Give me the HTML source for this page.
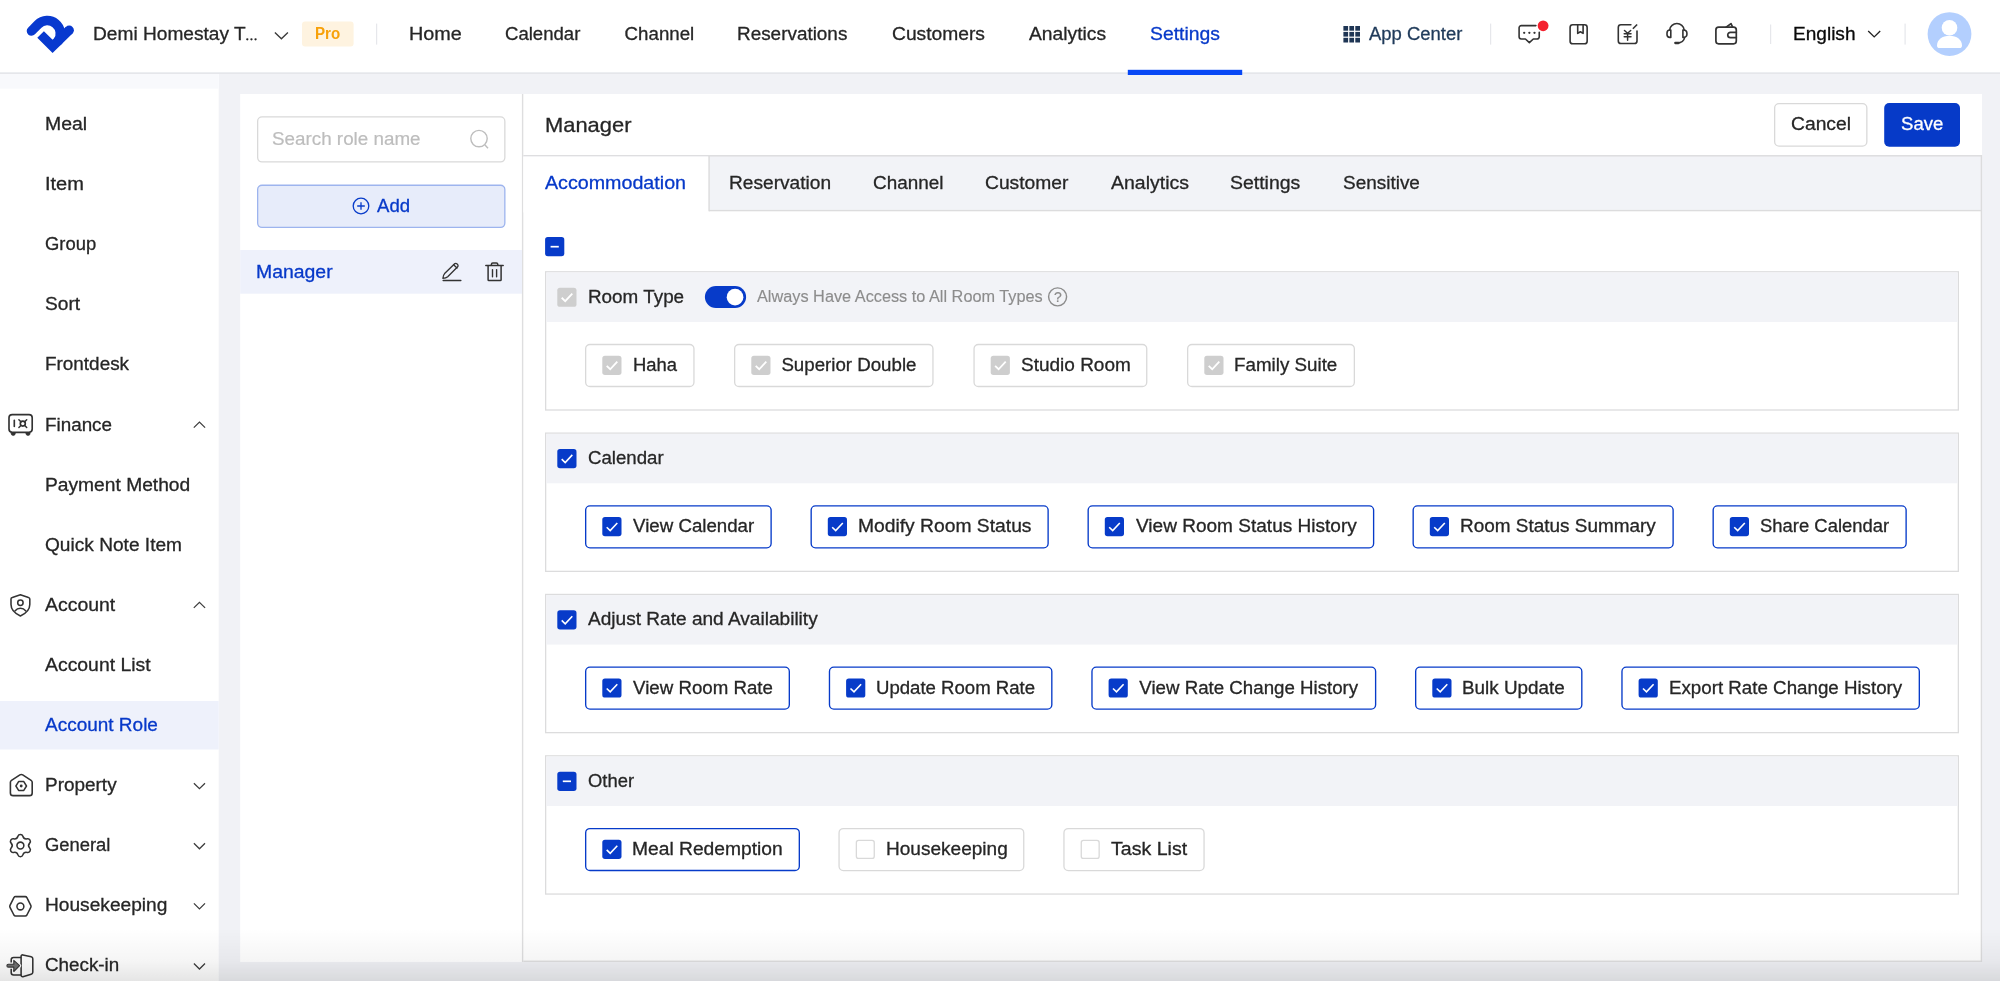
<!DOCTYPE html>
<html lang="en"><head><meta charset="utf-8"><title>Account Role</title>
<style>
html,body{margin:0;padding:0}
body{width:2000px;height:981px;overflow:hidden;position:relative;background:#f1f2f6;font-family:"Liberation Sans", sans-serif;}
#w{position:absolute;left:0;top:0;width:2000px;height:981px;will-change:transform}
#g{position:absolute;left:0;top:0}
.t{position:absolute;white-space:nowrap;line-height:30px;transform-origin:0 50%;font-family:"Liberation Sans", sans-serif;-webkit-text-stroke:0.3px currentColor}
.a{position:absolute}
</style></head><body><div id="w">
<svg id="g" width="2000" height="981" viewBox="0 0 2000 981">
<rect x="0" y="72" width="218.7" height="909" fill="#ffffff"/>
<rect x="0" y="72" width="218.7" height="16.7" fill="#f8f9fc"/>
<rect x="240.2" y="94" width="1741.8" height="867.9" fill="#ffffff"/>
<rect x="523.3" y="960.6" width="1458.7" height="1.3" fill="#dcdcdd"/>
<rect x="521.9" y="94" width="1.4" height="868" fill="#dededf"/>
<rect x="0" y="0" width="2000" height="72" fill="#ffffff"/>
<rect x="0" y="72" width="2000" height="1" fill="#eceef1"/>
<rect x="0" y="73" width="2000" height="1" fill="#e5e6ea"/>
<path d="M31.5 31 L38.05 24.33 A13.1 13.1 0 0 1 58.1 41" fill="none" stroke="#0839cf" stroke-width="9.6" stroke-linecap="round"/>
<path d="M40.6 34.5 L52.6 46.4 L69.2 30.2" fill="none" stroke="#0839cf" stroke-width="9.4" stroke-linejoin="miter"/>
<circle cx="69.2" cy="30.2" r="4.7" fill="#0839cf"/>
<g fill="#262626"><circle cx="247.3" cy="39.3" r="1.15"/><circle cx="251.45" cy="39.3" r="1.15"/><circle cx="255.55" cy="39.3" r="1.15"/></g>
<path d="M274.9 32.5 L281.4 38.8 L287.9 32.5" fill="none" stroke="#3a3a3a" stroke-width="1.35"/>
<rect x="302" y="21.6" width="51.6" height="25" fill="#fef3e0" rx="3"/>
<rect x="376" y="23.6" width="1.2" height="21" fill="#e6e7eb"/>
<rect x="1127.8" y="69.8" width="114.4" height="5.2" fill="#0848f5"/>
<g fill="#1e3554"><rect x="1343.40" y="26.00" width="4.7" height="4.7"/><rect x="1343.40" y="31.90" width="4.7" height="4.7"/><rect x="1343.40" y="37.80" width="4.7" height="4.7"/><rect x="1349.35" y="26.00" width="4.7" height="4.7"/><rect x="1349.35" y="31.90" width="4.7" height="4.7"/><rect x="1349.35" y="37.80" width="4.7" height="4.7"/><rect x="1355.30" y="26.00" width="4.7" height="4.7"/><rect x="1355.30" y="31.90" width="4.7" height="4.7"/><rect x="1355.30" y="37.80" width="4.7" height="4.7"/></g>
<rect x="1490" y="23.6" width="1.2" height="21" fill="#e6e7eb"/>
<rect x="1770" y="24.5" width="1.2" height="19.5" fill="#e6e7eb"/>
<rect x="1904.5" y="23.6" width="1.2" height="21" fill="#e6e7eb"/>
<path d="M1868.2 31 L1874.2 36.9 L1880.2 31" fill="none" stroke="#222" stroke-width="1.35"/>
<g transform="translate(1927.6 12.2)" ><circle cx="21.9" cy="21.9" r="21.9" fill="#b3cffe"/>
<circle cx="21.9" cy="15.6" r="7.8" fill="#fff"/>
<path d="M9.4 33.5 C9.4 27.5 14.5 23.6 21.9 23.6 C29.3 23.6 34.4 27.5 34.4 33.5 C34.4 35 33.4 35.8 32 35.8 L11.8 35.8 C10.4 35.8 9.4 35 9.4 33.5 Z" fill="#fff"/></g>
<rect x="0" y="701" width="218.7" height="48.5" fill="#eef1fb"/>
<path d="M193.8 427.6 L199.45 422.1 L205.1 427.6" fill="none" stroke="#3c3c3c" stroke-width="1.25"/>
<path d="M193.8 607.9 L199.45 602.4 L205.1 607.9" fill="none" stroke="#3c3c3c" stroke-width="1.25"/>
<path d="M193.9 783.2 L199.45 788.7 L205 783.2" fill="none" stroke="#3c3c3c" stroke-width="1.25"/>
<path d="M193.9 843.3 L199.45 848.8 L205 843.3" fill="none" stroke="#3c3c3c" stroke-width="1.25"/>
<path d="M193.9 903.4 L199.45 908.9 L205 903.4" fill="none" stroke="#3c3c3c" stroke-width="1.25"/>
<path d="M193.9 963.5 L199.45 969.0 L205 963.5" fill="none" stroke="#3c3c3c" stroke-width="1.25"/>
<rect x="257.65" y="116.85" width="247.20" height="45.10" rx="4.35" fill="#fff" stroke="#d9d9d9" stroke-width="1.3"/>
<g transform="translate(469 128)" ><circle cx="10" cy="10.6" r="8.2" fill="none" stroke="#bdbdbd" stroke-width="1.4"/><path d="M16 17 L19 20.2" stroke="#bdbdbd" stroke-width="1.4"/></g>
<rect x="257.65" y="185.25" width="247.20" height="42.20" rx="4.35" fill="#e7ecfa" stroke="#9db4ee" stroke-width="1.3"/>
<g transform="translate(352 197)" ><circle cx="9" cy="9" r="7.8" fill="none" stroke="#073bc9" stroke-width="1.3"/><path d="M9 5.2 V12.8 M5.2 9 H12.8" stroke="#073bc9" stroke-width="1.3"/></g>
<rect x="240.2" y="250" width="281.8" height="43.7" fill="#eef1fb"/>
<rect x="1774.65" y="103.65" width="92.20" height="42.50" rx="4.35" fill="#fff" stroke="#d9d9d9" stroke-width="1.3"/>
<rect x="1884.2" y="103" width="75.8" height="43.8" fill="#063ac8" rx="5"/>
<rect x="523.3" y="155" width="1458.7" height="56" fill="#f2f3f7"/>
<rect x="523.3" y="155.1" width="1458.7" height="1.4" fill="#dcdcdd"/>
<rect x="709" y="209.9" width="1273" height="1.4" fill="#dcdcdd"/>
<rect x="523.3" y="156.5" width="185.2" height="56" fill="#fff"/>
<rect x="708.4" y="156" width="1.4" height="55.3" fill="#dcdcdd"/>
<rect x="1980.7" y="155.1" width="1.4" height="806.8" fill="#dcdcdd"/>
<g transform="translate(545.1 237.1)" ><rect width="19.2" height="19.2" rx="2.7" fill="#073bc9"/><path d="M5.5 9.6 H13.7" stroke="#fff" stroke-width="1.7"/></g>
<rect x="545.65" y="271.80" width="1412.70" height="138.20" rx="0.00" fill="#fff" stroke="#dcdcdd" stroke-width="1.3"/>
<rect x="546.3" y="272.45" width="1411.4" height="49.5" fill="#f2f3f7"/>
<g transform="translate(557.3 287.65)" ><rect width="19.2" height="19.2" rx="2.7" fill="#cecece"/><path d="M4.4 10.1 L7.9 13.5 L15 5.9" fill="none" stroke="#fff" stroke-width="1.8"/></g>
<rect x="585.65" y="344.50" width="108.30" height="42.00" rx="4.35" fill="#fff" stroke="#d9d9d9" stroke-width="1.3"/>
<g transform="translate(602.3 355.75)" ><rect width="19.2" height="19.2" rx="2.7" fill="#cecece"/><path d="M4.4 10.1 L7.9 13.5 L15 5.9" fill="none" stroke="#fff" stroke-width="1.8"/></g>
<rect x="734.65" y="344.50" width="198.30" height="42.00" rx="4.35" fill="#fff" stroke="#d9d9d9" stroke-width="1.3"/>
<g transform="translate(751.3 355.75)" ><rect width="19.2" height="19.2" rx="2.7" fill="#cecece"/><path d="M4.4 10.1 L7.9 13.5 L15 5.9" fill="none" stroke="#fff" stroke-width="1.8"/></g>
<rect x="974.05" y="344.50" width="172.70" height="42.00" rx="4.35" fill="#fff" stroke="#d9d9d9" stroke-width="1.3"/>
<g transform="translate(990.6999999999999 355.75)" ><rect width="19.2" height="19.2" rx="2.7" fill="#cecece"/><path d="M4.4 10.1 L7.9 13.5 L15 5.9" fill="none" stroke="#fff" stroke-width="1.8"/></g>
<rect x="1187.65" y="344.50" width="166.70" height="42.00" rx="4.35" fill="#fff" stroke="#d9d9d9" stroke-width="1.3"/>
<g transform="translate(1204.3 355.75)" ><rect width="19.2" height="19.2" rx="2.7" fill="#cecece"/><path d="M4.4 10.1 L7.9 13.5 L15 5.9" fill="none" stroke="#fff" stroke-width="1.8"/></g>
<g transform="translate(704.9 286)" ><rect width="41.2" height="22.05" rx="11" fill="#073bc9"/><circle cx="30.15" cy="11.2" r="8.35" fill="#fff"/></g>
<circle cx="1057.6" cy="296.85" r="9" fill="none" stroke="#8c8c8c" stroke-width="1.45"/>
<rect x="545.65" y="433.15" width="1412.70" height="138.20" rx="0.00" fill="#fff" stroke="#dcdcdd" stroke-width="1.3"/>
<rect x="546.3" y="433.8" width="1411.4" height="49.5" fill="#f2f3f7"/>
<g transform="translate(557.3 449.0)" ><rect width="19.2" height="19.2" rx="2.7" fill="#073bc9"/><path d="M4.4 10.1 L7.9 13.5 L15 5.9" fill="none" stroke="#fff" stroke-width="1.6"/></g>
<rect x="585.67" y="505.88" width="185.45" height="41.95" rx="4.33" fill="#fff" stroke="#073bc9" stroke-width="1.35"/>
<g transform="translate(602.3 517.1)" ><rect width="19.2" height="19.2" rx="2.7" fill="#073bc9"/><path d="M4.4 10.1 L7.9 13.5 L15 5.9" fill="none" stroke="#fff" stroke-width="1.6"/></g>
<rect x="811.17" y="505.88" width="236.95" height="41.95" rx="4.33" fill="#fff" stroke="#073bc9" stroke-width="1.35"/>
<g transform="translate(827.8 517.1)" ><rect width="19.2" height="19.2" rx="2.7" fill="#073bc9"/><path d="M4.4 10.1 L7.9 13.5 L15 5.9" fill="none" stroke="#fff" stroke-width="1.6"/></g>
<rect x="1088.17" y="505.88" width="285.45" height="41.95" rx="4.33" fill="#fff" stroke="#073bc9" stroke-width="1.35"/>
<g transform="translate(1104.8 517.1)" ><rect width="19.2" height="19.2" rx="2.7" fill="#073bc9"/><path d="M4.4 10.1 L7.9 13.5 L15 5.9" fill="none" stroke="#fff" stroke-width="1.6"/></g>
<rect x="1413.17" y="505.88" width="259.95" height="41.95" rx="4.33" fill="#fff" stroke="#073bc9" stroke-width="1.35"/>
<g transform="translate(1429.8 517.1)" ><rect width="19.2" height="19.2" rx="2.7" fill="#073bc9"/><path d="M4.4 10.1 L7.9 13.5 L15 5.9" fill="none" stroke="#fff" stroke-width="1.6"/></g>
<rect x="1713.17" y="505.88" width="192.95" height="41.95" rx="4.33" fill="#fff" stroke="#073bc9" stroke-width="1.35"/>
<g transform="translate(1729.8 517.1)" ><rect width="19.2" height="19.2" rx="2.7" fill="#073bc9"/><path d="M4.4 10.1 L7.9 13.5 L15 5.9" fill="none" stroke="#fff" stroke-width="1.6"/></g>
<rect x="545.65" y="594.45" width="1412.70" height="138.20" rx="0.00" fill="#fff" stroke="#dcdcdd" stroke-width="1.3"/>
<rect x="546.3" y="595.0999999999999" width="1411.4" height="49.5" fill="#f2f3f7"/>
<g transform="translate(557.3 610.3)" ><rect width="19.2" height="19.2" rx="2.7" fill="#073bc9"/><path d="M4.4 10.1 L7.9 13.5 L15 5.9" fill="none" stroke="#fff" stroke-width="1.6"/></g>
<rect x="585.67" y="667.17" width="203.65" height="41.95" rx="4.33" fill="#fff" stroke="#073bc9" stroke-width="1.35"/>
<g transform="translate(602.3 678.4)" ><rect width="19.2" height="19.2" rx="2.7" fill="#073bc9"/><path d="M4.4 10.1 L7.9 13.5 L15 5.9" fill="none" stroke="#fff" stroke-width="1.6"/></g>
<rect x="829.47" y="667.17" width="222.35" height="41.95" rx="4.33" fill="#fff" stroke="#073bc9" stroke-width="1.35"/>
<g transform="translate(846.0999999999999 678.4)" ><rect width="19.2" height="19.2" rx="2.7" fill="#073bc9"/><path d="M4.4 10.1 L7.9 13.5 L15 5.9" fill="none" stroke="#fff" stroke-width="1.6"/></g>
<rect x="1091.97" y="667.17" width="283.65" height="41.95" rx="4.33" fill="#fff" stroke="#073bc9" stroke-width="1.35"/>
<g transform="translate(1108.6 678.4)" ><rect width="19.2" height="19.2" rx="2.7" fill="#073bc9"/><path d="M4.4 10.1 L7.9 13.5 L15 5.9" fill="none" stroke="#fff" stroke-width="1.6"/></g>
<rect x="1415.67" y="667.17" width="166.15" height="41.95" rx="4.33" fill="#fff" stroke="#073bc9" stroke-width="1.35"/>
<g transform="translate(1432.3 678.4)" ><rect width="19.2" height="19.2" rx="2.7" fill="#073bc9"/><path d="M4.4 10.1 L7.9 13.5 L15 5.9" fill="none" stroke="#fff" stroke-width="1.6"/></g>
<rect x="1621.97" y="667.17" width="297.35" height="41.95" rx="4.33" fill="#fff" stroke="#073bc9" stroke-width="1.35"/>
<g transform="translate(1638.6 678.4)" ><rect width="19.2" height="19.2" rx="2.7" fill="#073bc9"/><path d="M4.4 10.1 L7.9 13.5 L15 5.9" fill="none" stroke="#fff" stroke-width="1.6"/></g>
<rect x="545.65" y="755.85" width="1412.70" height="138.20" rx="0.00" fill="#fff" stroke="#dcdcdd" stroke-width="1.3"/>
<rect x="546.3" y="756.5" width="1411.4" height="49.5" fill="#f2f3f7"/>
<g transform="translate(557.3 771.7)" ><rect width="19.2" height="19.2" rx="2.7" fill="#073bc9"/><path d="M5.5 9.6 H13.7" stroke="#fff" stroke-width="1.7"/></g>
<rect x="585.67" y="828.58" width="213.65" height="41.95" rx="4.33" fill="#fff" stroke="#073bc9" stroke-width="1.35"/>
<g transform="translate(602.3 839.8000000000001)" ><rect width="19.2" height="19.2" rx="2.7" fill="#073bc9"/><path d="M4.4 10.1 L7.9 13.5 L15 5.9" fill="none" stroke="#fff" stroke-width="1.6"/></g>
<rect x="839.05" y="828.55" width="184.70" height="42.00" rx="4.35" fill="#fff" stroke="#d9d9d9" stroke-width="1.3"/>
<g transform="translate(855.6999999999999 839.8000000000001)" ><rect x="0.65" y="0.65" width="17.9" height="17.9" rx="2.2" fill="#fff" stroke="#d9d9d9" stroke-width="1.3"/></g>
<rect x="1063.95" y="828.55" width="140.10" height="42.00" rx="4.35" fill="#fff" stroke="#d9d9d9" stroke-width="1.3"/>
<g transform="translate(1080.6 839.8000000000001)" ><rect x="0.65" y="0.65" width="17.9" height="17.9" rx="2.2" fill="#fff" stroke="#d9d9d9" stroke-width="1.3"/></g>
<g fill="none" stroke="#333333" stroke-width="1.6" stroke-linecap="round" stroke-linejoin="round">
<path d="M1535.9 25.6 H1521.3 A2.2 2.2 0 0 0 1519.1 27.8 V36.8 A2.2 2.2 0 0 0 1521.3 39 H1525.4 L1529.35 42.7 L1533.3 39 H1537 A2.2 2.2 0 0 0 1539.25 36.8 V32.2"/>
<g fill="#333" stroke="none"><circle cx="1524.2" cy="32.8" r="1.15"/><circle cx="1529.35" cy="32.8" r="1.15"/><circle cx="1534.5" cy="32.8" r="1.15"/></g>
<circle cx="1543.1" cy="25.8" r="5.4" fill="#f4212e" stroke="none"/></g>
<g fill="none" stroke="#333333" stroke-width="1.6" stroke-linecap="round" stroke-linejoin="round">
<rect x="1570.1" y="24.8" width="17.05" height="19" rx="2.6"/>
<path d="M1577.7 25 V33.4 L1580.4 31.7 L1583.1 33.4 V25"/></g>
<g fill="none" stroke="#333333" stroke-width="1.6" stroke-linecap="round" stroke-linejoin="round">
<path d="M1630.9 24.8 H1620.9 A2.6 2.6 0 0 0 1618.3 27.4 V40.9 A2.6 2.6 0 0 0 1620.9 43.5 H1634.4 A2.6 2.6 0 0 0 1637 40.9 V31"/>
<path d="M1637.1 24.5 L1632.9 28.7" stroke-linecap="butt"/>
<path d="M1624.5 30.5 L1627.6 33.3 L1630.7 30.5 M1627.6 33.3 V40.2 M1624.2 33.7 H1631 M1624.2 36.8 H1631" stroke-width="1.5"/></g>
<g fill="none" stroke="#333333" stroke-width="1.6" stroke-linecap="round" stroke-linejoin="round">
<path d="M1669.6 30 A7.35 7.35 0 0 1 1684.2 30"/>
<path d="M1670.8 30 V37.4 H1669.9 A3 3 0 0 1 1667 34.4 V33 A3 3 0 0 1 1669.9 30 Z"/>
<path d="M1682.9 30 V37.4 H1683.9 A3 3 0 0 0 1686.9 34.4 V33 A3 3 0 0 0 1683.9 30 Z"/>
<path d="M1684.6 37.6 C1684 40.6 1681 42.8 1677.5 43"/>
<path d="M1675.3 43 H1678.6" stroke-width="2.3"/></g>
<g fill="none" stroke="#333333" stroke-width="1.7" stroke-linecap="round" stroke-linejoin="round">
<rect x="1715.9" y="27.2" width="20.4" height="16.6" rx="2.7"/>
<path d="M1726.1 27.2 L1731 23.6 L1732.6 27.2"/>
<path d="M1736.3 32.3 H1730.4 A2.65 2.65 0 0 0 1730.4 37.6 H1736.3"/></g>
<g fill="none" stroke="#333333" stroke-width="1.65" stroke-linecap="round" stroke-linejoin="round">
<rect x="9" y="414.6" width="23.2" height="17.7" rx="3.2"/>
<path d="M14.3 420.4 V426.5"/>
<circle cx="22.8" cy="423.6" r="2.5"/>
<path d="M20.9 421.7 L18.9 419.7 M24.7 421.7 L26.7 419.7 M20.9 425.5 L18.9 427.5 M24.7 425.5 L26.7 427.5" stroke-width="1.5"/>
<path d="M11 433 H15.4 A2.2 2.6 0 0 1 11 433 Z M25.8 433 H30.2 A2.2 2.6 0 0 1 25.8 433 Z" fill="#333" stroke-width="0.6"/></g>
<g fill="none" stroke="#333333" stroke-width="1.55" stroke-linecap="round" stroke-linejoin="round">
<path d="M20.4 594.8 L12.3 597.4 A1.8 1.8 0 0 0 11 599.1 V604.6 C11 609.6 14.6 613.4 20.4 616 C26.2 613.4 29.8 609.6 29.8 604.6 V599.1 A1.8 1.8 0 0 0 28.5 597.4 Z"/>
<circle cx="20.4" cy="602.75" r="2.7"/>
<path d="M14.9 610.9 C16.4 609.2 18.3 608.3 20.4 608.3 C22.5 608.3 24.4 609.2 25.9 610.9"/></g>
<g fill="none" stroke="#333333" stroke-width="1.6" stroke-linecap="round" stroke-linejoin="round">
<path d="M19.9 774.9 L11.5 780.3 A2.4 2.4 0 0 0 10.4 782.3 V792.9 A2.7 2.7 0 0 0 13.1 795.6 H29.5 A2.7 2.7 0 0 0 32.2 792.9 V782.3 A2.4 2.4 0 0 0 31.1 780.3 L22.7 774.9 A2.6 2.6 0 0 0 19.9 774.9 Z"/>
<path d="M18.6 781.6 H23.8 L26.5 786 L23.8 790.4 H18.6 L15.9 786 Z" stroke-width="1.5"/>
<circle cx="21.2" cy="786" r="1.45" fill="#333" stroke="none"/></g>
<g fill="none" stroke="#333333" stroke-width="1.55" stroke-linecap="round" stroke-linejoin="round"><path d="M17.92 836.33 A2.6 2.6 0 0 1 22.88 836.33 A3.67 3.67 0 0 0 27.19 838.81 A2.6 2.6 0 0 1 29.67 843.11 A3.67 3.67 0 0 0 29.67 848.09 A2.6 2.6 0 0 1 27.19 852.39 A3.67 3.67 0 0 0 22.88 854.87 A2.6 2.6 0 0 1 17.92 854.87 A3.67 3.67 0 0 0 13.61 852.39 A2.6 2.6 0 0 1 11.13 848.09 A3.67 3.67 0 0 0 11.13 843.11 A2.6 2.6 0 0 1 13.61 838.81 A3.67 3.67 0 0 0 17.92 836.33 Z"/><circle cx="20.4" cy="845.6" r="3.45"/></g>
<g fill="none" stroke="#333333" stroke-width="1.55" stroke-linecap="round" stroke-linejoin="round">
<path d="M15.6 896.6 H25.2 A2 2 0 0 1 26.9 897.6 L30.8 905.4 A2.2 2.2 0 0 1 30.8 907.4 L26.9 915 A2 2 0 0 1 25.2 916 H15.6 A2 2 0 0 1 13.9 915 L10 907.4 A2.2 2.2 0 0 1 10 905.4 L13.9 897.6 A2 2 0 0 1 15.6 896.6 Z"/>
<circle cx="20.4" cy="906.4" r="3.45"/></g>
<g fill="none" stroke="#333333" stroke-width="1.55" stroke-linecap="round" stroke-linejoin="round">
<rect x="11.2" y="957.5" width="12" height="17.4" rx="2.4"/>
<path d="M22.9 954.9 L31.2 956.7 A2 2 0 0 1 32.8 958.7 V972.3 A2 2 0 0 1 31.2 974.2 L22.9 976.7 A1.5 1.5 0 0 1 21.1 975.3 V956.3 A1.5 1.5 0 0 1 22.9 954.9 Z" fill="#fff"/>
<path d="M8.3 964.3 H13.8 V960.4 L19.6 965.7 L13.8 971.5 V967.1 H8.3 A1.4 1.4 0 0 1 8.3 964.3 Z" stroke="#fff" stroke-width="3.4" fill="#fff"/>
<path d="M8.3 964.3 H13.8 V960.4 L19.6 965.7 L13.8 971.5 V967.1 H8.3 A1.4 1.4 0 0 1 8.3 964.3 Z" stroke="#383838" stroke-width="1.1" fill="#727272"/></g>
<g fill="none" stroke="#333333" stroke-width="1.5" stroke-linecap="round" stroke-linejoin="round">
<path d="M443.2 280.6 H460.8"/>
<path d="M454.4 263.9 L444.6 273.6 C443.6 274.7 443 276.7 442.9 278.4 C444.7 278.3 446.6 277.7 447.7 276.7 L457.9 266.6 A2.3 2.3 0 0 0 454.4 263.9 Z" stroke-width="1.35"/>
<path d="M453.6 264.8 L457 268" stroke-width="1.3"/></g>
<g fill="none" stroke="#333333" stroke-width="1.5" stroke-linecap="round" stroke-linejoin="round">
<path d="M485.8 265.5 H503.2"/>
<path d="M491.4 265.3 V264.2 A1.4 1.4 0 0 1 492.8 262.9 H496.4 A1.4 1.4 0 0 1 497.8 264.2 V265.3"/>
<path d="M488.1 265.7 V279.7 A0.8 0.8 0 0 0 488.9 280.5 H500.3 A0.8 0.8 0 0 0 501.1 279.7 V265.7"/>
<path d="M492.5 269.6 V276.7 M496.6 269.6 V276.7" stroke-width="1.4"/></g>
</svg>
<span class="t" style="left:93.18px;top:19px;font-size:18.7px;color:#262626;transform:scaleX(1.0235);">Demi Homestay T</span>
<span class="t" style="left:315.39px;top:19px;font-size:15.6px;color:#f7a10a;font-weight:700;-webkit-text-stroke-width:0px;transform:scaleX(0.9693);">Pro</span>
<span class="t" style="left:408.93px;top:19px;font-size:18.7px;color:#262626;transform:scaleX(1.0591);">Home</span>
<span class="t" style="left:504.81px;top:19px;font-size:18.7px;color:#262626;transform:scaleX(0.9935);">Calendar</span>
<span class="t" style="left:624.60px;top:19px;font-size:18.7px;color:#262626;">Channel</span>
<span class="t" style="left:737.20px;top:19px;font-size:18.7px;color:#262626;transform:scaleX(1.0117);">Reservations</span>
<span class="t" style="left:891.57px;top:19px;font-size:18.7px;color:#262626;transform:scaleX(1.0289);">Customers</span>
<span class="t" style="left:1029.11px;top:19px;font-size:18.7px;color:#262626;transform:scaleX(1.0301);">Analytics</span>
<span class="t" style="left:1149.67px;top:19px;font-size:18.7px;color:#0739c9;transform:scaleX(1.0347);">Settings</span>
<span class="t" style="left:1368.81px;top:19px;font-size:18.7px;color:#1f3a5a;transform:scaleX(0.9873);">App Center</span>
<span class="t" style="left:1792.79px;top:19px;font-size:18.7px;color:#0a0a0a;transform:scaleX(1.0197);">English</span>
<span class="t" style="left:45.03px;top:109px;font-size:18.7px;color:#262626;transform:scaleX(1.0397);">Meal</span>
<span class="t" style="left:44.83px;top:169px;font-size:18.7px;color:#262626;transform:translateY(0.10px) scaleX(1.0710);">Item</span>
<span class="t" style="left:45.06px;top:229px;font-size:18.7px;color:#262626;transform:translateY(0.20px) scaleX(0.9848);">Group</span>
<span class="t" style="left:44.96px;top:289px;font-size:18.7px;color:#262626;transform:translateY(0.30px) scaleX(1.0247);">Sort</span>
<span class="t" style="left:45.07px;top:349px;font-size:18.7px;color:#262626;transform:translateY(0.40px) scaleX(1.0116);">Frontdesk</span>
<span class="t" style="left:45.07px;top:409px;font-size:18.7px;color:#262626;transform:translateY(0.50px) scaleX(1.0080);">Finance</span>
<span class="t" style="left:45.04px;top:469px;font-size:18.7px;color:#262626;transform:translateY(0.60px) scaleX(1.0281);">Payment Method</span>
<span class="t" style="left:45.08px;top:529px;font-size:18.7px;color:#262626;transform:translateY(0.70px) scaleX(1.0227);">Quick Note Item</span>
<span class="t" style="left:45.18px;top:589px;font-size:18.7px;color:#262626;transform:translateY(0.80px) scaleX(1.0397);">Account</span>
<span class="t" style="left:45.18px;top:649px;font-size:18.7px;color:#262626;transform:translateY(0.90px) scaleX(1.0375);">Account List</span>
<span class="t" style="left:45.18px;top:710px;font-size:18.7px;color:#0739c9;transform:scaleX(1.0158);">Account Role</span>
<span class="t" style="left:45.07px;top:770px;font-size:18.7px;color:#262626;transform:translateY(0.10px) scaleX(1.0139);">Property</span>
<span class="t" style="left:45.06px;top:830px;font-size:18.7px;color:#262626;transform:translateY(0.20px) scaleX(0.9840);">General</span>
<span class="t" style="left:45.05px;top:890px;font-size:18.7px;color:#262626;transform:translateY(0.30px) scaleX(1.0239);">Housekeeping</span>
<span class="t" style="left:45.03px;top:950px;font-size:18.7px;color:#262626;transform:translateY(0.40px) scaleX(1.0067);">Check-in</span>
<span class="t" style="left:271.54px;top:123px;font-size:18.7px;color:#bdbdbd;-webkit-text-stroke-width:0.2px;transform:translateY(0.70px) scaleX(1.0073);">Search role name</span>
<span class="t" style="left:377.01px;top:190px;font-size:18.7px;color:#0739c9;transform:translateY(0.70px) scaleX(0.9930);">Add</span>
<span class="t" style="left:255.56px;top:256px;font-size:18.7px;color:#0739c9;transform:translateY(0.50px) scaleX(1.0386);">Manager</span>
<span class="t" style="left:544.75px;top:110px;font-size:21px;color:#262626;transform:scaleX(1.0431);">Manager</span>
<span class="t" style="left:1790.67px;top:109px;font-size:18.7px;color:#262626;transform:translateY(0.20px) scaleX(1.0309);">Cancel</span>
<span class="t" style="left:1900.81px;top:109px;font-size:18.7px;color:#fff;transform:translateY(0.20px) scaleX(0.9944);">Save</span>
<span class="t" style="left:545.31px;top:168px;font-size:18.7px;color:#0739c9;transform:scaleX(1.0524);">Accommodation</span>
<span class="t" style="left:729.08px;top:168px;font-size:18.7px;color:#262626;transform:scaleX(1.0230);">Reservation</span>
<span class="t" style="left:872.69px;top:168px;font-size:18.7px;color:#262626;transform:scaleX(1.0115);">Channel</span>
<span class="t" style="left:984.67px;top:168px;font-size:18.7px;color:#262626;transform:scaleX(1.0306);">Customer</span>
<span class="t" style="left:1110.61px;top:168px;font-size:18.7px;color:#262626;transform:scaleX(1.0423);">Analytics</span>
<span class="t" style="left:1230.27px;top:168px;font-size:18.7px;color:#262626;transform:scaleX(1.0408);">Settings</span>
<span class="t" style="left:1342.79px;top:168px;font-size:18.7px;color:#262626;transform:scaleX(1.0142);">Sensitive</span>
<span class="t" style="left:587.57px;top:281px;font-size:18.7px;color:#262626;transform:translateY(0.65px) scaleX(1.0094);">Room Type</span>
<span class="t" style="left:632.51px;top:349px;font-size:18.7px;color:#262626;transform:translateY(0.85px) scaleX(0.9855);">Haha</span>
<span class="t" style="left:781.38px;top:349px;font-size:18.7px;color:#262626;transform:translateY(0.85px);">Superior Double</span>
<span class="t" style="left:1020.77px;top:349px;font-size:18.7px;color:#262626;transform:translateY(0.85px) scaleX(1.0167);">Studio Room</span>
<span class="t" style="left:1234.48px;top:349px;font-size:18.7px;color:#262626;transform:translateY(0.85px) scaleX(1.0048);">Family Suite</span>
<span class="t" style="left:756.94px;top:282px;font-size:16.9px;color:#8c8c8c;-webkit-text-stroke-width:0.15px;transform:scaleX(0.9643);">Always Have Access to All Room Types</span>
<span class="t" style="left:1053.90px;top:281px;font-size:14px;color:#8c8c8c;-webkit-text-stroke-width:0.2px;transform:translateY(0.70px);">?</span>
<span class="t" style="left:587.54px;top:443px;font-size:18.7px;color:#262626;transform:scaleX(0.9970);">Calendar</span>
<span class="t" style="left:633.04px;top:511px;font-size:18.7px;color:#262626;transform:translateY(0.20px);">View Calendar</span>
<span class="t" style="left:857.94px;top:511px;font-size:18.7px;color:#262626;transform:translateY(0.20px) scaleX(1.0312);">Modify Room Status</span>
<span class="t" style="left:1135.53px;top:511px;font-size:18.7px;color:#262626;transform:translateY(0.20px) scaleX(1.0186);">View Room Status History</span>
<span class="t" style="left:1459.97px;top:511px;font-size:18.7px;color:#262626;transform:translateY(0.20px) scaleX(1.0137);">Room Status Summary</span>
<span class="t" style="left:1759.90px;top:511px;font-size:18.7px;color:#262626;transform:translateY(0.20px) scaleX(0.9867);">Share Calendar</span>
<span class="t" style="left:587.68px;top:604px;font-size:18.7px;color:#262626;transform:translateY(0.30px) scaleX(1.0205);">Adjust Rate and Availability</span>
<span class="t" style="left:633.04px;top:672px;font-size:18.7px;color:#262626;transform:translateY(0.50px);">View Room Rate</span>
<span class="t" style="left:876.15px;top:672px;font-size:18.7px;color:#262626;transform:translateY(0.50px) scaleX(0.9947);">Update Room Rate</span>
<span class="t" style="left:1139.34px;top:672px;font-size:18.7px;color:#262626;transform:translateY(0.50px);">View Rate Change History</span>
<span class="t" style="left:1462.47px;top:672px;font-size:18.7px;color:#262626;transform:translateY(0.50px) scaleX(1.0099);">Bulk Update</span>
<span class="t" style="left:1668.78px;top:672px;font-size:18.7px;color:#262626;transform:translateY(0.50px) scaleX(1.0023);">Export Rate Change History</span>
<span class="t" style="left:587.61px;top:765px;font-size:18.7px;color:#262626;transform:translateY(0.70px) scaleX(0.9848);">Other</span>
<span class="t" style="left:632.44px;top:833px;font-size:18.7px;color:#262626;transform:translateY(0.90px) scaleX(1.0293);">Meal Redemption</span>
<span class="t" style="left:885.86px;top:833px;font-size:18.7px;color:#262626;transform:translateY(0.90px) scaleX(1.0187);">Housekeeping</span>
<span class="t" style="left:1110.69px;top:833px;font-size:18.7px;color:#262626;transform:translateY(0.90px) scaleX(1.0468);">Task List</span>
<div class="a" style="left:0;top:928px;width:2000px;height:53px;background:linear-gradient(to bottom, rgba(0,0,0,0) 0%, rgba(0,0,0,0.04) 62%, rgba(0,0,0,0.10) 100%)"></div>
</div></body></html>
